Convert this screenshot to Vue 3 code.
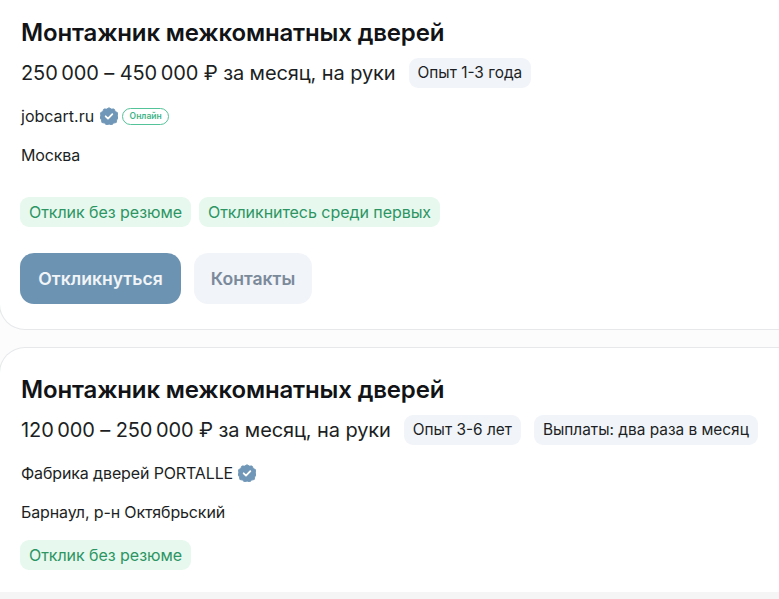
<script setup>
const jobs = [
  {
    title: 'Монтажник межкомнатных дверей',
    salary: '250\u2009000 – 450\u2009000 ₽ за месяц, на руки',
    chips: ['Опыт 1-3 года'],
    company: 'jobcart.ru',
    online: true,
    city: 'Москва',
    tags: ['Отклик без резюме', 'Откликнитесь среди первых'],
    actions: true
  },
  {
    title: 'Монтажник межкомнатных дверей',
    salary: '120\u2009000 – 250\u2009000 ₽ за месяц, на руки',
    chips: ['Опыт 3-6 лет', 'Выплаты: два раза в месяц'],
    company: 'Фабрика дверей PORTALLE',
    online: false,
    city: 'Барнаул, р-н Октябрьский',
    tags: ['Отклик без резюме'],
    actions: false
  }
]
</script>

<template>
  <div class="page">
    <div v-for="(job, i) in jobs" :key="i" class="card" :class="{ first: i === 0, second: i === 1 }">
      <h2 class="title">{{ job.title }}</h2>
      <div class="salary-row">
        <span class="salary">{{ job.salary }}</span>
        <span v-for="chip in job.chips" :key="chip" class="chip">{{ chip }}</span>
      </div>
      <div class="company">
        <span>{{ job.company }}</span>
        <svg class="badge" viewBox="0 0 20 20" width="18" height="18">
          <path fill="#7097b8" d="M10 .8l2.6 1.5 3-.1 1.4 2.7 2.6 1.5-.2 3 1.2 2.6-2 2.2-.5 3-2.9.7-2.2 2-2.9-.9-2.9.9-2.2-2-2.9-.7-.5-3-2-2.2 1.200-2.600-.2-3L3 4.900l1.400-2.700 3 .1z" stroke="#7097b8" stroke-width="1" stroke-linejoin="round" />
          <path fill="none" stroke="#fff" stroke-width="2" stroke-linecap="round" stroke-linejoin="round" d="M6.300 10.300l2.600 2.600 4.800-5" />
        </svg>
        <span v-if="job.online" class="online">Онлайн</span>
      </div>
      <div class="city">{{ job.city }}</div>
      <div class="tags">
        <span v-for="tag in job.tags" :key="tag" class="tag">{{ tag }}</span>
      </div>
      <div v-if="job.actions" class="actions">
        <button class="btn primary">Откликнуться</button>
        <button class="btn secondary">Контакты</button>
      </div>
    </div>
    <div class="next-card"></div>
  </div>
</template>

<style>
html, body {
  margin: 0;
  background: #fff;
}
</style>

<style scoped>
.page {
  width: 779px;
  height: 599px;
  overflow: hidden;
  font-family: Inter, "Noto Sans", sans-serif;
  color: #1c1f24;
  background: #fcfcfc;
}

.card {
  box-sizing: border-box;
  width: 830px;
  margin-left: -1px;
  padding-left: 21px;
  background: #fff;
  border: 1px solid #e6e8ea;
  border-radius: 26px;
}

.first {
  height: 330px;
  padding-top: 18px;
  border-top: none;
  border-top-left-radius: 0;
  margin-bottom: 17px;
}

.second {
  height: 245px;
  padding-top: 27px;
  border-bottom: none;
  border-bottom-left-radius: 0;
}

.next-card {
  height: 20px;
  background: #f5f5f5;
}

.title {
  margin: 0;
  font-size: 24px;
  line-height: 30px;
  font-weight: 600;
  letter-spacing: -0.15px;
  color: #111316;
}

.salary-row {
  display: flex;
  align-items: center;
  gap: 13px;
  margin-top: 10px;
  height: 30px;
}

.salary {
  font-size: 20px;
  line-height: 30px;
  letter-spacing: -0.1px;
  white-space: nowrap;
}

.chip {
  padding: 0 9px;
  height: 30px;
  line-height: 30px;
  font-size: 15.4px;
  background: #f1f4f8;
  border-radius: 9px;
  white-space: nowrap;
}

.company {
  display: flex;
  align-items: center;
  gap: 6px;
  margin-top: 16px;
  height: 24px;
  font-size: 16px;
}

.second .company {
  gap: 5px;
  letter-spacing: -0.13px;
}

.badge {
  flex: none;
}

.online {
  box-sizing: border-box;
  margin-left: -2px;
  width: 47px;
  height: 17px;
  line-height: 15px;
  text-align: center;
  font-size: 8.5px;
  font-weight: 600;
  color: #3fb488;
  border: 1px solid #55c39a;
  border-radius: 9px;
}

.city {
  margin-top: 15px;
  height: 24px;
  line-height: 24px;
  font-size: 16px;
  letter-spacing: -0.13px;
}

.tags {
  display: flex;
  gap: 8px;
  margin-top: 30px;
  margin-left: -1px;
}

.second .tags {
  margin-top: 16px;
}

.tag {
  padding: 0 9px;
  height: 30px;
  line-height: 30px;
  font-size: 16px;
  letter-spacing: -0.05px;
  color: #2c9563;
  background: #e7f8ee;
  border-radius: 9px;
}

.actions {
  display: flex;
  gap: 13px;
  margin-top: 26px;
  margin-left: -1px;
}

.btn {
  height: 51px;
  border: none;
  border-radius: 14px;
  font-family: inherit;
  font-size: 17.6px;
  font-weight: 600;
}

.primary {
  width: 161px;
  color: #f1f5f8;
  background: #6d93b2;
}

.secondary {
  width: 118px;
  color: #7b8a9b;
  background: #f1f4f8;
}
</style>
